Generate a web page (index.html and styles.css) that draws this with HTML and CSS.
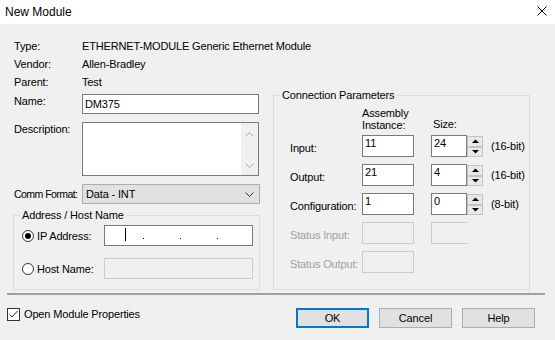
FILE: index.html
```html
<!DOCTYPE html>
<html>
<head>
<meta charset="utf-8">
<title>New Module</title>
<link rel="stylesheet" href="styles.css">
</head>
<body>
<div class="titlebar">
  <span class="title">New Module</span>
  <svg class="close" viewBox="0 0 10 10" width="10" height="10"><path d="M0.5 0.5L9.5 9.5M9.5 0.5L0.5 9.5" stroke="#000" stroke-width="1" fill="none"/></svg>
</div>
<div class="main">
  <div class="left">
    <div class="info"><span class="lbl">Type:</span><span>ETHERNET-MODULE Generic Ethernet Module</span></div>
    <div class="info"><span class="lbl">Vendor:</span><span>Allen-Bradley</span></div>
    <div class="info"><span class="lbl">Parent:</span><span>Test</span></div>
    <div class="row row-name"><span class="lbl">Name:</span><div class="edit name">DM375</div></div>
    <div class="row row-desc"><span class="lbl">Description:</span>
      <div class="edit desc">
        <div class="desc-text"></div>
        <div class="vscroll">
          <svg width="9" height="5" viewBox="0 0 9 5"><path d="M0.5 4.5L4.5 0.5L8.5 4.5" stroke="#a6a6a6" fill="none"/></svg>
          <svg width="9" height="5" viewBox="0 0 9 5"><path d="M0.5 0.5L4.5 4.5L8.5 0.5" stroke="#a6a6a6" fill="none"/></svg>
        </div>
      </div>
    </div>
    <div class="row row-comm"><span class="lbl lbl-tight">Comm Format:</span>
      <div class="combo"><span>Data - INT</span>
        <svg width="9" height="5" viewBox="0 0 9 5"><path d="M0.5 0.5L4.5 4.5L8.5 0.5" stroke="#333" fill="none"/></svg>
      </div>
    </div>
    <fieldset class="group addr">
      <legend>Address / Host Name</legend>
      <div class="addr-body">
        <div class="addr-row">
          <div class="radio"><span class="circle on"></span><span>IP Address:</span></div>
          <div class="edit ip"><span class="caret"></span><span class="ipdot d1"></span><span class="ipdot d2"></span><span class="ipdot d2"></span></div>
        </div>
        <div class="addr-row">
          <div class="radio"><span class="circle"></span><span>Host Name:</span></div>
          <div class="edit ip disabled"></div>
        </div>
      </div>
    </fieldset>
  </div>
  <fieldset class="group conn">
    <legend>Connection Parameters</legend>
    <div class="conn-body">
      <div class="crow chead">
        <span class="clbl"></span>
        <span class="ch-asm">Assembly<br>Instance:</span>
        <span class="ch-size">Size:</span>
      </div>
      <div class="crow first">
        <span class="clbl">Input:</span>
        <div class="edit asm">11</div>
        <div class="size-group"><div class="edit size">24</div>
          <div class="spin"><div class="spin-btn"><svg width="7" height="4" viewBox="0 0 7 4"><path d="M0 4L3.5 0.5L7 4Z" fill="#000"/></svg></div><div class="spin-btn"><svg width="7" height="4" viewBox="0 0 7 4"><path d="M0 0L3.5 3.5L7 0Z" fill="#000"/></svg></div></div>
        </div>
        <span class="unit">(16-bit)</span>
      </div>
      <div class="crow">
        <span class="clbl">Output:</span>
        <div class="edit asm">21</div>
        <div class="size-group"><div class="edit size">4</div>
          <div class="spin"><div class="spin-btn"><svg width="7" height="4" viewBox="0 0 7 4"><path d="M0 4L3.5 0.5L7 4Z" fill="#000"/></svg></div><div class="spin-btn"><svg width="7" height="4" viewBox="0 0 7 4"><path d="M0 0L3.5 3.5L7 0Z" fill="#000"/></svg></div></div>
        </div>
        <span class="unit">(16-bit)</span>
      </div>
      <div class="crow">
        <span class="clbl">Configuration:</span>
        <div class="edit asm">1</div>
        <div class="size-group"><div class="edit size">0</div>
          <div class="spin"><div class="spin-btn"><svg width="7" height="4" viewBox="0 0 7 4"><path d="M0 4L3.5 0.5L7 4Z" fill="#000"/></svg></div><div class="spin-btn"><svg width="7" height="4" viewBox="0 0 7 4"><path d="M0 0L3.5 3.5L7 0Z" fill="#000"/></svg></div></div>
        </div>
        <span class="unit">(8-bit)</span>
      </div>
      <div class="crow dis">
        <span class="clbl">Status Input:</span>
        <div class="edit asm disabled"></div>
        <div class="size-group"><div class="edit size disabled noright"></div></div>
      </div>
      <div class="crow dis">
        <span class="clbl">Status Output:</span>
        <div class="edit asm disabled"></div>
      </div>
    </div>
  </fieldset>
</div>
<div class="sep"></div>
<div class="footer">
  <div class="check">
    <span class="box"><svg width="11" height="11" viewBox="0 0 11 11"><path d="M1.5 5.5L4 8L9.5 2" stroke="#222" stroke-width="1" fill="none"/></svg></span>
    <span>Open Module Properties</span>
  </div>
  <div class="buttons">
    <div class="btn default">OK</div>
    <div class="btn">Cancel</div>
    <div class="btn">Help</div>
  </div>
</div>
</body>
</html>
```

FILE: styles.css
```css
* { box-sizing: border-box; }
html, body { margin: 0; padding: 0; }
body {
  width: 555px;
  height: 340px;
  overflow: hidden;
  background: #f0f0f0;
  font-family: "Liberation Sans", Arial, sans-serif;
  font-size: 11px;
  letter-spacing: -0.15px;
  color: #000;
}

.titlebar {
  height: 24px;
  background: #fff;
  display: flex;
  align-items: center;
  justify-content: space-between;
  padding: 0 8px 0 5px;
}
.title { font-size: 12px; letter-spacing: 0; }
.close { display: block; margin-top: -2px; }

.main {
  display: grid;
  grid-template-columns: 247px 257px;
  column-gap: 13px;
  align-items: start;
  padding: 13px 0 0 13px;
}

.left { display: flex; flex-direction: column; }
.info { display: flex; line-height: 18px; white-space: nowrap; }
.lbl { width: 69px; flex: none; padding-left: 1px; white-space: nowrap; }
.lbl-tight { letter-spacing: -0.6px; font-size: 10.6px; }
.row { display: flex; line-height: 14px; }
.row-name { margin-top: 3px; }
.row-desc { margin-top: 8px; }
.row-comm { margin-top: 8px; align-items: center; }

.edit {
  border: 1px solid #7a7a7a;
  background: #fff;
  line-height: 14px;
  padding: 0 2px;
}
.edit.disabled { border-color: #cccccc; background: #f0f0f0; }
.edit.noright { border-right: none; }

.name { width: 177px; height: 20px; display: flex; align-items: center; }
.desc { width: 177px; height: 54px; display: flex; padding: 0; }
.desc-text { flex: 1; }
.vscroll {
  width: 17px;
  background: #f0f0f0;
  display: flex;
  flex-direction: column;
  align-items: center;
  justify-content: space-between;
  padding: 9px 0 7px;
}
.vscroll svg { display: block; }

.combo {
  width: 178px;
  height: 20px;
  background: #e1e1e1;
  border: 1px solid #adadad;
  display: flex;
  align-items: center;
  justify-content: space-between;
  padding: 0 5px 0 3px;
}
.combo svg { display: block; }

.group {
  margin: 0;
  padding: 0;
  min-width: 0;
  border: 1px solid #dcdcdc;
}
.group legend {
  margin-left: 6px;
  padding: 0 2px;
  line-height: 14px;
}

.addr { margin-top: 4px; width: 247px; }
.addr-body { padding: 3px 5px 10px 8px; display: flex; flex-direction: column; gap: 12px; }
.addr-row { display: flex; align-items: center; height: 21px; }
.radio { width: 82px; flex: none; display: flex; align-items: center; gap: 3px; }
.circle {
  width: 12px;
  height: 12px;
  border: 1px solid #333;
  border-radius: 50%;
  background: #fff;
  display: flex;
  align-items: center;
  justify-content: center;
}
.circle.on::after {
  content: "";
  width: 6px;
  height: 6px;
  border-radius: 50%;
  background: #000;
}
.ip { width: 149px; height: 21px; display: flex; align-items: flex-start; padding: 0 0 0 20px; }
.caret { width: 1px; height: 13px; background: #000; margin-top: 2px; }
.ipdot { width: 1px; height: 1px; background: #000; margin-top: 12px; }
.ipdot.d1 { margin-left: 17px; }
.ipdot.d2 { margin-left: 36px; }

.conn { margin-top: 51px; width: 257px; height: 202px; }
.conn-body { padding: 5px 0 0 16px; }
.crow { display: flex; height: 22px; margin-top: 7px; }
.crow.first { margin-top: 4px; }
.chead { height: 24px; margin-top: 0; align-items: flex-end; line-height: 12px; }
.ch-asm { width: 69px; }
.ch-size { padding-left: 2px; margin-bottom: 1px; }
.clbl { width: 72px; flex: none; line-height: 14px; padding-top: 6px; white-space: nowrap; }
.asm { width: 52px; height: 22px; }
.size-group { display: flex; margin-left: 17px; }
.size { width: 36px; height: 22px; }
.spin { width: 16px; height: 22px; display: flex; flex-direction: column; padding: 1px 0 0; }
.spin-btn {
  flex: 1;
  border: 1px solid #c4c4c4;
  background: #e8e8e8;
  display: flex;
  align-items: center;
  justify-content: center;
}
.spin-btn svg { display: block; }
.unit { margin-left: 8px; line-height: 14px; padding-top: 4px; }
.dis .clbl { color: #a0a0a0; }

.sep { height: 2px; background: #a0a0a0; margin: 3px 10px 0 7px; }
.footer {
  display: flex;
  justify-content: space-between;
  align-items: flex-start;
  padding: 13px 20px 0 7px;
}
.check { display: flex; align-items: center; gap: 4px; margin-top: -1px; line-height: 14px; }
.box { width: 13px; height: 13px; border: 1px solid #333; background: #fff; display: block; }
.box svg { display: block; }
.buttons { display: flex; gap: 10px; }
.btn {
  width: 73px;
  height: 20px;
  border: 1px solid #adadad;
  background: #e1e1e1;
  display: flex;
  align-items: center;
  justify-content: center;
}
.btn.default { border: 2px solid #0078d7; }
```
